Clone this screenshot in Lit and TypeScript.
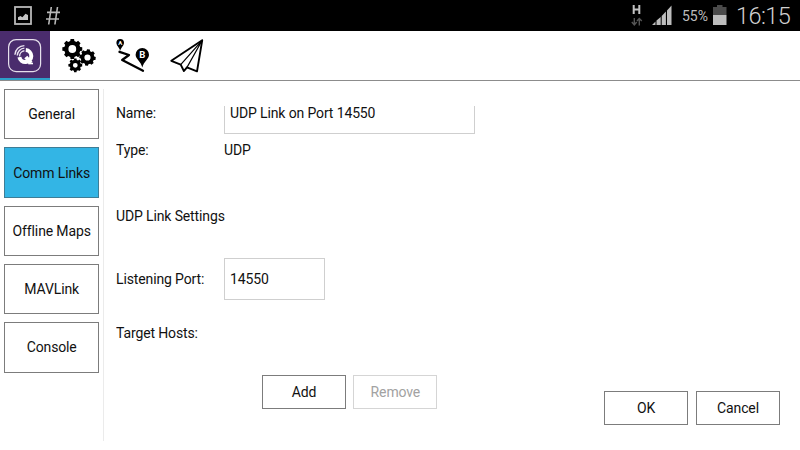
import { LitElement, html, css, svg } from "lit";
import { customElement, property } from "lit/decorators.js";

/** Outline of a cog with a round hole, centred on (cx, cy). */
function gear(cx: number, cy: number, outer: number, inner: number, hole: number, turn = 0): string {
  const teeth = 8;
  const step = (Math.PI * 2) / teeth;
  const points: string[] = [];
  const at = (r: number, a: number) =>
    `${(cx + r * Math.cos(a)).toFixed(2)} ${(cy + r * Math.sin(a)).toFixed(2)}`;
  for (let i = 0; i < teeth; i++) {
    const a = i * step + turn;
    points.push(at(inner, a - step * 0.33), at(outer, a - step * 0.22), at(outer, a + step * 0.22), at(inner, a + step * 0.33));
  }
  return `M${points.join("L")}Z M${cx - hole} ${cy}a${hole} ${hole} 0 1 0 ${hole * 2} 0a${hole} ${hole} 0 1 0 ${-hole * 2} 0Z`;
}

@customElement("status-bar")
class StatusBar extends LitElement {
  static styles = css`
    :host { display: flex; align-items: center; height: 31px; background: #000; color: #bdbdbd; font-family: Roboto, sans-serif; }
    svg { display: block; flex: none; }
    .grow { flex: 1; }
    .signal { margin-right: 4px; }
    .percent { font-size: 14px; width: 31px; line-height: 31px; padding-top: 2px; box-sizing: border-box; white-space: nowrap; letter-spacing: 0; }
    .clock { font-size: 23.5px; font-weight: 300; color: #d0d0d0; width: 64px; line-height: 31px; padding-top: 2px; box-sizing: border-box; white-space: nowrap; letter-spacing: -0.55px; margin-left: 9px; }
  `;
  render() {
    return html`
      <svg width="80" height="31" viewBox="0 0 80 31">
        <rect x="15" y="7" width="16" height="17" fill="none" stroke="#b8b8b8" stroke-width="1.8" />
        <path d="M18 20V17.3L20.4 16L22.4 17.2L25.5 13.7L28 15V20Z" fill="#c4c4c4" />
        <path d="M51.3 7L48.7 24.5M57.5 7L54.9 24.5M47 12.4H60M46 19H59" fill="none" stroke="#b8b8b8" stroke-width="1.6" />
      </svg>
      <span class="grow"></span>
      <svg class="signal" width="51" height="31" viewBox="627 0 51 31">
        <path d="M633.7 5V14M639.3 5V14M633.7 9.4H639.3" fill="none" stroke="#c2c2c2" stroke-width="2" />
        <path d="M634.3 18V25M631.8 22L634.3 25L636.7 22M639.3 25.5V18.5M636.9 21L639.3 18.5L641.8 21" fill="none" stroke="#555" stroke-width="1.4" />
        <path d="M652 25L655.5 21.5V25ZM656.5 20.6L660.7 17V25H656.5ZM661.7 16L665.9 11.5V25H661.7ZM667 10.5L671.5 5.5V25H667Z" fill="#bdbdbd" />
      </svg>
      <span class="percent">55%</span>
      <svg width="14" height="31" viewBox="713 0 14 31">
        <path d="M713 7H717V5H722.5V7H726.5V15H713Z" fill="#4b4b4b" />
        <path d="M713 15H726.5V25H713Z" fill="#bdbdbd" />
      </svg>
      <span class="clock">16:15</span>
    `;
  }
}

@customElement("tool-bar")
class ToolBar extends LitElement {
  static styles = css`
    :host { display: flex; height: 50px; box-sizing: border-box; border-bottom: 1px solid #8c8c8c; background: #fff; }
    svg { display: block; flex: none; }
    .home { background: #4a2c6d; height: 47px; width: 49.5px; border-bottom: 2px solid #2e9fc9; }
    .mark { font: 700 9.5px Roboto, sans-serif; fill: #fff; text-anchor: middle; }
    .small { font-size: 6px; }
  `;
  render() {
    return html`
      <div class="home">
        <svg width="49" height="47" viewBox="0 31 49 47">
          <rect x="8.6" y="39.6" width="32" height="32" rx="7.5" fill="none" stroke="#e6e0ec" stroke-width="1.2" />
          <path d="M25.8 50.1A6 6 0 1 1 19.4 57.2M25.8 57L31 63" fill="none" stroke="#fff" stroke-width="4" />
          <path d="M28.2 63.5H33" stroke="#fff" stroke-width="1.6" />
          <g fill="none" stroke="#e9e2ef" stroke-width="1.4">
            <path d="M14.9 54.8A9.6 9.6 0 0 1 24.4 45.6" />
            <path d="M17.3 55.6A7.6 7.6 0 0 1 24.4 48.1" />
            <path d="M19.6 56.4A5.4 5.4 0 0 1 24.4 50.8" />
          </g>
        </svg>
      </div>
      <svg width="55" height="49" viewBox="49.5 31 55 49">
        ${svg`<path fill-rule="evenodd" d="${gear(71.8, 49, 10.1, 8.2, 3.9, 0)}" />
        <path fill-rule="evenodd" d="${gear(87, 57.5, 8.3, 6.8, 3.1, 0.12)}" />
        <path fill-rule="evenodd" d="${gear(74.8, 65.3, 7, 5.6, 2.4, 0)}" />`}
      </svg>
      <svg width="55" height="49" viewBox="104.5 31 55 49">
        <path d="M119.7 50.8C118.8 47.4 115.9 45.8 115.9 42.8A3.8 3.8 0 0 1 123.5 42.8C123.5 45.8 120.6 47.4 119.7 50.8Z" />
        <path d="M141.8 67.5C140.5 61.5 135.1 59 135.1 54.7A6.7 6.7 0 0 1 148.5 54.7C148.5 59 143.2 61.5 141.8 67.5Z" />
        <path d="M119 51.8L128.5 55L121.7 60L142.5 70.7" fill="none" stroke="#000" stroke-width="2.3" stroke-linejoin="round" stroke-linecap="round" />
        <text class="mark small" x="119.7" y="45">A</text>
        <text class="mark" x="141.8" y="58.3">B</text>
      </svg>
      <svg width="55" height="49" viewBox="159.5 31 55 49">
        <path d="M201.7 40.3L170.8 60.8L180.2 64.6L183.4 71L186.5 67.3L196.5 71.3Z" fill="none" stroke="#000" stroke-width="1.9" stroke-linejoin="round" />
        <path d="M201.7 40.3L180.2 64.6M201.7 40.3L186.5 67.3L183.4 71" fill="none" stroke="#000" stroke-width="1.2" />
      </svg>
    `;
  }
}

@customElement("app-root")
class AppRoot extends LitElement {
  @property() selected = "Comm Links";

  static styles = css`
    :host { display: flex; flex-direction: column; width: 800px; height: 450px; background: #fff; color: #111; font: 14px/18px Roboto, sans-serif; letter-spacing: -0.13px; overflow: hidden; }
    .body { flex: 1; display: flex; min-height: 0; }
    .side { display: flex; flex-direction: column; gap: 7.9px; padding: 8.1px 4px 0; width: 95px; }
    .btn { box-sizing: border-box; display: flex; align-items: center; justify-content: center; width: 84px; height: 34px; border: 1px solid #7c7c7c; background: #fff; white-space: nowrap; }
    .nav { width: 95.4px; height: 50.4px; }
    .current { background: #33b5e5; border-color: #3e7d96; }
    .rule { width: 1px; margin: 8px 0 9px; background: #ebebeb; }
    .pane { flex: 1; display: flex; justify-content: space-between; margin: 25px 20px 0 12px; overflow: hidden; }
    .form { margin-top: -14px; display: grid; grid-template-columns: 108px 251px; grid-template-rows: 42px 32px 92px 42px 66px 52px; align-content: start; align-items: center; }
    .wide { grid-column: 1 / -1; }
    .heading { padding-top: 8px; }
    .field { box-sizing: border-box; border: 1px solid #cfcfcf; height: 42px; padding-left: 5px; display: flex; align-items: center; }
    .port { width: 101px; }
    .pair { display: flex; gap: 8px; }
    .pair.inner { margin-left: 146px; gap: 7.4px; }
    .pair.outer { align-self: flex-end; margin-bottom: 25px; }
    .off { border-color: #d5d5d5; color: #a2a2a2; }
  `;

  render() {
    const pages = ["General", "Comm Links", "Offline Maps", "MAVLink", "Console"];
    return html`
      <status-bar></status-bar>
      <tool-bar></tool-bar>
      <div class="body">
        <div class="side">
          ${pages.map((p) => html`<div class="btn nav ${p === this.selected ? "current" : ""}">${p}</div>`)}
        </div>
        <div class="rule"></div>
        <div class="pane">
          <div class="form">
            <span>Name:</span><div class="field">UDP Link on Port 14550</div>
            <span>Type:</span><span>UDP</span>
            <span class="wide heading">UDP Link Settings</span>
            <span>Listening Port:</span><div class="field port">14550</div>
            <span class="wide">Target Hosts:</span>
            <div class="wide pair inner"><div class="btn">Add</div><div class="btn off">Remove</div></div>
          </div>
          <div class="pair outer"><div class="btn">OK</div><div class="btn">Cancel</div></div>
        </div>
      </div>
    `;
  }
}
